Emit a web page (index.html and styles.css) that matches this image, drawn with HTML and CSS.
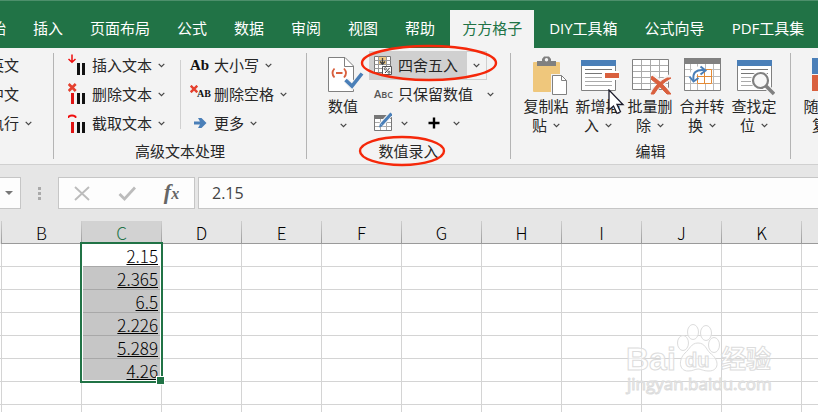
FILE: index.html
```
<!DOCTYPE html>
<html lang="zh-CN">
<head>
    <meta charset="UTF-8">
    <meta name="viewport" content="width=device-width, initial-scale=1.0">
    <title>方方格子</title>
    <link rel="stylesheet" href="styles.css">
</head>
<body>
    <!-- Shared symbols -->
    <svg class="symbols" aria-hidden="true">
        <symbol id="chevron" viewBox="0 0 7 5">
            <path d="M0.7 0.8 L3.5 3.6 L6.3 0.8" fill="none" stroke="#444" stroke-width="1.2"/>
        </symbol>
    </svg>

    <!-- Tabs -->
    <nav class="tabs">
        <a href="#">开始</a>
        <a href="#">插入</a>
        <a href="#">页面布局</a>
        <a href="#">公式</a>
        <a href="#">数据</a>
        <a href="#">审阅</a>
        <a href="#">视图</a>
        <a href="#">帮助</a>
        <a href="#" class="active">方方格子</a>
        <a href="#">DIY工具箱</a>
        <a href="#">公式向导</a>
        <a href="#">PDF工具集</a>
    </nav>

    <!-- Ribbon -->
    <div class="ribbon">
        <section class="group group-first">
            <div class="group-body">
                <div class="stack">
                    <button class="item">英文</button>
                    <button class="item">中文</button>
                    <button class="item">执行<svg class="chevron"><use href="#chevron"/></svg></button>
                </div>
            </div>
        </section>
        <span class="divider"></span>

        <section class="group">
            <div class="group-body">
                <div class="stack stack-text">
                    <button class="item">
                        <svg class="icon" viewBox="0 0 18 22"><path d="M4 0.500v7.500M0.500 5L4 8.200L7.500 5" fill="none" stroke="#f00d0d" stroke-width="1.500"/><path d="M9 9h3v12H9zM14 9h3v12h-3z" fill="#111"/></svg>
                        插入文本<svg class="chevron"><use href="#chevron"/></svg>
                    </button>
                    <button class="item">
                        <svg class="icon" viewBox="0 0 18 22"><path d="M0.700 1l7 7M7.700 1l-7 7" stroke="#e5402e" stroke-width="2.600"/><path d="M3 10h3v11H3z" fill="#e01414"/><path d="M9 10h3v11H9zM14 10h3v11h-3z" fill="#111"/></svg>
                        删除文本<svg class="chevron"><use href="#chevron"/></svg>
                    </button>
                    <button class="item">
                        <svg class="icon" viewBox="0 0 18 22"><path d="M0.500 6V4.500Q4 2.500 7.500 4.500V6" fill="none" stroke="#f00d0d" stroke-width="1.800"/><path d="M3 10h3v11H3z" fill="#e01414"/><path d="M9 10h3v11H9zM14 10h3v11h-3z" fill="#111"/></svg>
                        截取文本<svg class="chevron"><use href="#chevron"/></svg>
                    </button>
                </div>
                <span class="divider divider-inner"></span>
                <div class="stack stack-case">
                    <button class="item"><span class="icon glyph-case">Ab</span>大小写<svg class="chevron"><use href="#chevron"/></svg></button>
                    <button class="item">
                        <span class="icon glyph-space"><svg viewBox="0 0 8 8"><path d="M0.700 0.700l6.600 6.600M7.300 0.700L0.700 7.300" stroke="#e5402e" stroke-width="2.400"/></svg>AB</span>
                        删除空格<svg class="chevron"><use href="#chevron"/></svg>
                    </button>
                    <button class="item">
                        <svg class="icon" viewBox="0 0 18 22"><path d="M4 9.500h6L8 6h3.500l5 5l-5 5H8l2-3.500H4z" fill="#4a7fb8"/></svg>
                        更多<svg class="chevron"><use href="#chevron"/></svg>
                    </button>
                </div>
            </div>
            <h2 class="group-name">高级文本处理</h2>
        </section>
        <span class="divider"></span>

        <section class="group">
            <div class="group-body group-number">
                <button class="big big-narrow">
                    <svg class="big-icon" viewBox="0 0 42 42">
                        <path d="M6.500 2.500H23L31.500 11V36.500H6.500z" fill="#fff" stroke="#808080"/>
                        <path d="M22.500 2.500V11.500H31.500" fill="none" stroke="#808080"/>
                        <path d="M12.500 13.500q-4 4.500 0 9M22 13.500q4 4.500 0 9M14 18h6.500" fill="none" stroke="#d9603e" stroke-width="1.800"/>
                        <path d="M24 25l6 6.500L40 19" fill="none" stroke="#f3f3f3" stroke-width="6"/>
                        <path d="M23.500 25l6.500 6L40 18.500" fill="none" stroke="#4a7fb8" stroke-width="3.600"/>
                    </svg>
                    <span>数值</span>
                    <span><svg class="chevron"><use href="#chevron"/></svg></span>
                </button>
                <div class="stack">
                    <div class="split">
                        <button class="item split-main">
                            <svg class="icon" viewBox="0 0 18 22">
                                <path d="M0.500 2.500h16v16h-16z" fill="#fff" stroke="#777"/>
                                <path d="M5 3h7v8H5z" fill="#efc981"/>
                                <path d="M4.500 2.500v16M12.500 2.500v16M0.500 6.500h16M0.500 10.500h16M0.500 14.500h16" stroke="#999"/>
                                <path d="M8.500 4v6M6 7.500l2.500 2.700L11 7.500" fill="none" stroke="#444" stroke-width="1.300"/>
                                <path d="M8.500 12.500h9v8h-9z" fill="#fff" stroke="#555"/>
                                <path d="M11 19l4.500-5" stroke="#333"/><circle cx="11.300" cy="14.800" r="1.100" fill="none" stroke="#333" stroke-width=".8"/><circle cx="15" cy="18.200" r="1.100" fill="none" stroke="#333" stroke-width=".8"/>
                            </svg>
                            四舍五入
                        </button>
                        <button class="split-arrow" aria-label="四舍五入选项"><svg class="chevron"><use href="#chevron"/></svg></button>
                        <svg class="mark mark-round" viewBox="0 0 138 38"><ellipse cx="69" cy="19" rx="67" ry="17"/></svg>
                    </div>
                    <button class="item item-keep"><span class="icon glyph-abc">A<small>BC</small></span>只保留数值<svg class="chevron"><use href="#chevron"/></svg></button>
                    <div class="tools">
                        <button class="item" aria-label="录入">
                            <svg class="icon" viewBox="0 0 18 22">
                                <path d="M0.500 3.500h17v15h-17z" fill="#fff" stroke="#777"/>
                                <path d="M0 3h18v4H0z" fill="#777"/>
                                <path d="M6.500 7v11M12.500 7v11M1 10.500h16M1 14.500h16" stroke="#aaa"/>
                                <path d="M7 13L17 2" stroke="#f3f3f3" stroke-width="5"/>
                                <path d="M7.500 12.500L17.500 1.500" stroke="#4a7fb8" stroke-width="3"/>
                                <path d="M5 15.500l1-4l3 2.500z" fill="#4a7fb8"/>
                            </svg>
                            <svg class="chevron"><use href="#chevron"/></svg>
                        </button>
                        <button class="item" aria-label="加">
                            <svg class="icon" viewBox="0 0 18 22"><path d="M8 5.500v11M2.500 11h11" stroke="#000" stroke-width="2.400"/></svg>
                            <svg class="chevron"><use href="#chevron"/></svg>
                        </button>
                    </div>
                </div>
            </div>
            <h2 class="group-name"><span class="marked">数值录入<svg class="mark mark-name" viewBox="0 0 88 32"><ellipse cx="44" cy="16" rx="42" ry="14"/></svg></span></h2>
        </section>
        <span class="divider"></span>

        <section class="group">
            <div class="group-body group-edit">
                <button class="big">
                    <svg class="big-icon" viewBox="0 0 42 42">
                        <rect x="8" y="7" width="27" height="30" rx="1" fill="#efc77c"/>
                        <path d="M12 6h5v-2l2-2.500h5l2 2.500v2h5v5H12z" fill="#808080"/>
                        <circle cx="21.500" cy="4.800" r="1.700" fill="#f3f3f3"/>
                        <path d="M26 19h11l6 6v17H26z" fill="#f3f3f3"/>
                        <path d="M27.500 20.500h9l5 5v14h-14z" fill="#fff" stroke="#808080"/>
                        <path d="M36.500 20.500v5h5" fill="none" stroke="#808080"/>
                    </svg>
                    <span>复制粘</span>
                    <span>贴<svg class="chevron"><use href="#chevron"/></svg></span>
                </button>
                <button class="big">
                    <svg class="big-icon" viewBox="0 0 42 42">
                        <path d="M4.500 5.500h34v30h-34z" fill="#fff" stroke="#808080"/>
                        <path d="M4 5h35v6H4z" fill="#4a7fb8"/>
                        <path d="M8 14.500h27M8 18.500h17" stroke="#777"/>
                        <path d="M8 22.500h17M8 26.500h27M8 30.500h27" stroke="#aaa"/>
                        <path d="M26 16h16v9H26z" fill="#fff"/>
                        <path d="M28 18h14v5H28z" fill="#d9603e"/>
                    </svg>
                    <span>新增插</span>
                    <span>入<svg class="chevron"><use href="#chevron"/></svg></span>
                    <svg class="pointer" viewBox="0 0 17 26"><path d="M1 1v20l4.500-4L9 24.500l3.500-1.700L9 15.500h6z" fill="#fff" stroke="#1c1c2c" stroke-width="1.300"/></svg>
                </button>
                <button class="big">
                    <svg class="big-icon" viewBox="0 0 42 42">
                        <path d="M3.500 4.500h36v30h-36z" fill="#fff" stroke="#808080"/>
                        <path d="M12.500 5v29M21.500 5v29M30.500 5v29M4 10.500h35M4 16.500h35M4 22.500h35M4 28.500h35" stroke="#aaa"/>
                        <path d="M23 21Q31 27 41 39M41 22Q29 29 23 38" fill="none" stroke="#f3f3f3" stroke-width="6"/>
                        <path d="M23 21Q33 27 42 39L38 39Q31 31 22 24zM42 23Q31 29 25 39L22 39Q26 29 38 23z" fill="#d9603e" stroke="#d9603e"/>
                    </svg>
                    <span>批量删</span>
                    <span>除<svg class="chevron"><use href="#chevron"/></svg></span>
                </button>
                <button class="big">
                    <svg class="big-icon" viewBox="0 0 42 42">
                        <path d="M3.500 4.500h36v31h-36z" fill="#fff" stroke="#808080"/>
                        <path d="M9.500 9v26M16.500 9v26M24.500 9v26M32.500 9v26M4 14.500h35M4 21.500h35M4 28.500h35" stroke="#bbb"/>
                        <path d="M3 3h37v6H3z" fill="#808080"/>
                        <path d="M16.500 14.500h14v14h-14zM23.500 14.500v14M16.500 21.500h14" fill="#fff" stroke="#e48a35"/>
                        <path d="M12 24Q11 14 22 14.500" fill="none" stroke="#fff" stroke-width="7"/>
                        <path d="M12.500 25Q11 14 23 15" fill="none" stroke="#4a7fb8" stroke-width="2"/>
                        <path d="M19.500 11.500l5 4l-5 4M8.500 21.500l4 5l5-3.500" fill="none" stroke="#4a7fb8" stroke-width="2"/>
                    </svg>
                    <span>合并转</span>
                    <span>换<svg class="chevron"><use href="#chevron"/></svg></span>
                </button>
                <button class="big">
                    <svg class="big-icon" viewBox="0 0 42 42">
                        <path d="M4.500 5.500h34v30h-34z" fill="#fff" stroke="#808080"/>
                        <path d="M4 5h35v6H4z" fill="#4a7fb8"/>
                        <path d="M8 14.500h27M8 18.500h27" stroke="#777"/>
                        <path d="M8 22.500h13M8 26.500h10M8 30.500h13" stroke="#aaa"/>
                        <path d="M33 31l8 8" stroke="#f3f3f3" stroke-width="6"/>
                        <circle cx="27.500" cy="25.500" r="9.500" fill="#fff"/>
                        <circle cx="27.500" cy="25.500" r="7.500" fill="#f8f8f8" stroke="#808080" stroke-width="2.200"/>
                        <path d="M33 31l8 8" stroke="#808080" stroke-width="3.500"/>
                    </svg>
                    <span>查找定</span>
                    <span>位<svg class="chevron"><use href="#chevron"/></svg></span>
                </button>
            </div>
            <h2 class="group-name">编辑</h2>
        </section>
        <span class="divider"></span>

        <section class="group">
            <div class="group-body group-edit">
                <button class="big">
                    <svg class="big-icon" viewBox="0 0 42 42"><path d="M7 3h16v16H7z" fill="#4a7fb8"/><path d="M7 20h16v16H7z" fill="#d9603e"/></svg>
                    <span>随机重</span>
                    <span>复<svg class="chevron"><use href="#chevron"/></svg></span>
                </button>
            </div>
        </section>
    </div>

    <!-- Formula bar -->
    <div class="formula-bar">
        <button class="name-box" aria-label="名称框"><svg viewBox="0 0 8 4"><path d="M0 0h8L4 4z" fill="#777"/></svg></button>
        <span class="grip"><i></i><i></i><i></i></span>
        <div class="formula-tools">
            <button aria-label="取消"><svg viewBox="0 0 18 18"><path d="M2 3l14 13M16 3L2 16" stroke="#bcbcbc" stroke-width="1.900"/></svg></button>
            <button aria-label="输入"><svg viewBox="0 0 18 18"><path d="M1.500 10l5 5L17 3.500" fill="none" stroke="#bcbcbc" stroke-width="2.800"/></svg></button>
            <button class="fx" aria-label="插入函数">f<small>x</small></button>
        </div>
        <input class="formula-input" type="text" value="2.15" aria-label="编辑栏">
    </div>

    <!-- Sheet -->
    <div class="sheet">
        <table>
            <colgroup><col class="col-edge"><col class="col"><col class="col"><col class="col"><col class="col"><col class="col"><col class="col"><col class="col"><col class="col"><col class="col"><col class="col"><col></colgroup>
            <thead>
                <tr><th></th><th>B</th><th class="selected">C</th><th>D</th><th>E</th><th>F</th><th>G</th><th>H</th><th>I</th><th>J</th><th>K</th><th></th></tr>
            </thead>
            <tbody>
                <tr><td></td><td></td><td class="value first">2.15<span class="selection"></span></td><td></td><td></td><td></td><td></td><td></td><td></td><td></td><td></td><td></td></tr>
                <tr><td></td><td></td><td class="value">2.365</td><td></td><td></td><td></td><td></td><td></td><td></td><td></td><td></td><td></td></tr>
                <tr><td></td><td></td><td class="value">6.5</td><td></td><td></td><td></td><td></td><td></td><td></td><td></td><td></td><td></td></tr>
                <tr><td></td><td></td><td class="value">2.226</td><td></td><td></td><td></td><td></td><td></td><td></td><td></td><td></td><td></td></tr>
                <tr><td></td><td></td><td class="value">5.289</td><td></td><td></td><td></td><td></td><td></td><td></td><td></td><td></td><td></td></tr>
                <tr><td></td><td></td><td class="value">4.26</td><td></td><td></td><td></td><td></td><td></td><td></td><td></td><td></td><td></td></tr>
                <tr><td></td><td></td><td></td><td></td><td></td><td></td><td></td><td></td><td></td><td></td><td></td><td></td></tr>
                <tr><td></td><td></td><td></td><td></td><td></td><td></td><td></td><td></td><td></td><td></td><td></td><td></td></tr>
            </tbody>
        </table>
    </div>

    <!-- Watermark -->
    <svg class="watermark" viewBox="0 0 150 76">
        <g class="watermark-outline">
            <text class="wm-name" x="2" y="46">Bai</text>
            <ellipse cx="59" cy="19" rx="5.500" ry="7.500"/>
            <ellipse cx="69" cy="8" rx="5.500" ry="7.500"/>
            <ellipse cx="82" cy="9" rx="5.500" ry="7.500"/>
            <ellipse cx="90" cy="21" rx="5.500" ry="7.500"/>
            <path d="M74 19C81 19 82 25 86 29C96 36 95 47 85 47C79 47 77 45 74 45C71 45 69 47 64 47C55 47 54 36 61 29C66 25 67 19 74 19z"/>
            <text class="wm-du" x="61" y="43">du</text>
            <text class="wm-cjk" x="97" y="44">经验</text>
            <text class="wm-url" x="3" y="66">jingyan.baidu.com</text>
        </g>
    </svg>
</body>
</html>
```
FILE: styles.css
```
* {
    box-sizing: border-box;
}

body {
    margin: 0;
    height: 100vh;
    overflow: hidden;
    position: relative;
    background-color: #fff;
    color: #262626;
    font-family: "Open Sans", "Noto Sans CJK SC", sans-serif;
    font-size: 15px;
}

button {
    margin: 0;
    padding: 0;
    border: none;
    background: none;
    color: inherit;
    font: inherit;
    white-space: nowrap;
}

.symbols {
    display: none;
}

/* Tabs */
.tabs {
    display: flex;
    gap: 3px;
    height: 48px;
    padding-top: 9px;
    overflow: hidden;
    background-color: #217346;
    border-top: 1px solid #4d8f6b;
}

.tabs a {
    flex: none;
    padding: 0 12px;
    line-height: 36px;
    color: #fff;
    text-decoration: none;
}

.tabs a:first-child {
    margin-left: -36px;
}

.tabs .active {
    background-color: #f3f3f3;
    color: #217346;
}

/* Ribbon */
.ribbon {
    position: relative;
    display: flex;
    height: 117px;
    padding-top: 3px;
    background-color: #f3f3f3;
    border-bottom: 1px solid #d0d0d0;
}

.group {
    flex: none;
}

.group:last-child {
    flex: 1;
    min-width: 0;
    overflow: hidden;
}

.group-first {
    width: 64px;
    margin-left: -11px;
}

.group-body {
    display: flex;
    height: 87px;
}

.group-name {
    margin: 0;
    font-size: 15px;
    font-weight: normal;
    line-height: 26px;
    text-align: center;
}

.divider {
    flex: none;
    width: 1px;
    margin: 2px 0 5px;
    background-color: #b4b4b4;
}

.divider-inner {
    margin: 9px 0;
    background-color: #d0d0d0;
}

.stack {
    display: flex;
    flex-direction: column;
    align-items: flex-start;
}

.stack-text {
    padding: 0 15px 0 14px;
}

.stack-case {
    padding: 0 19px 0 9px;
}

.item {
    display: flex;
    align-items: center;
    gap: 6px;
    height: 29px;
    line-height: 22px;
    padding-bottom: 1px;
}

.icon {
    flex: none;
    width: 18px;
    height: 22px;
}

.chevron {
    flex: none;
    width: 7px;
    height: 5px;
}

.glyph-case {
    color: #111;
    font: bold 15px/22px "Liberation Serif", serif;
    text-align: right;
}

.glyph-space {
    display: flex;
    align-items: center;
    color: #111;
    font: bold 10px/22px "Liberation Serif", serif;
}

.glyph-space svg {
    flex: none;
    width: 8px;
    height: 8px;
    margin: 0 -1px 10px 0;
}

.glyph-abc {
    color: #555;
    font-size: 11px;
    font-weight: 600;
    line-height: 22px;
    text-align: left;
}

.glyph-abc small {
    font-size: 9px;
}

.group-number {
    gap: 4px;
    padding: 0 16px 0 14px;
}

.split {
    position: relative;
    display: flex;
}

.split-main {
    padding: 0 9px 1px 5px;
    background-color: #d0d0d0;
}

.split-arrow {
    display: flex;
    align-items: center;
    justify-content: center;
    width: 20px;
    border: 1px solid #d0d0d0;
    border-left: none;
}

.item-keep {
    padding-left: 5px;
}

.item-keep .chevron {
    margin-left: 8px;
}

.tools {
    display: flex;
    gap: 18px;
    padding-left: 5px;
}

.tools .item {
    gap: 9px;
}

.mark {
    position: absolute;
    fill: none;
    stroke: #f5280a;
    stroke-width: 2.4px;
    pointer-events: none;
}

.mark-round {
    left: -9px;
    top: -7px;
    width: 138px;
    height: 38px;
}

.marked {
    position: relative;
}

.mark-name {
    left: -21px;
    top: -6px;
    width: 88px;
    height: 32px;
}

.group-edit {
    padding: 0 10px 0 9px;
}

.big {
    position: relative;
    display: flex;
    flex: none;
    flex-direction: column;
    align-items: center;
    width: 52px;
    padding-top: 4px;
}

.big-narrow {
    width: 44px;
}

.big-icon {
    flex: none;
    width: 42px;
    height: 42px;
}

.big span {
    display: flex;
    align-items: center;
    gap: 6px;
    height: 19px;
    line-height: 19px;
}

.pointer {
    position: absolute;
    left: 36px;
    top: 38px;
    width: 17px;
    height: 26px;
}

/* Formula bar */
.formula-bar {
    display: flex;
    height: 56px;
    padding: 12px 0;
    background-color: #e6e6e6;
}

.name-box {
    width: 21px;
    padding-right: 7px;
    border: 1px solid #c6c6c6;
    border-left: none;
    background-color: #fdfdfd;
    text-align: right;
}

.name-box svg {
    display: block;
    width: 8px;
    height: 4px;
    margin-left: auto;
}

.grip {
    display: flex;
    flex-direction: column;
    align-items: center;
    justify-content: center;
    gap: 2px;
    width: 37px;
}

.grip i {
    width: 3px;
    height: 3px;
    background-color: #aaa;
}

.formula-tools {
    display: flex;
    width: 137px;
    margin-right: 3px;
    border: 1px solid #c6c6c6;
    background-color: #fdfdfd;
}

.formula-tools button {
    flex: 1;
}

.formula-tools svg {
    display: block;
    width: 18px;
    height: 18px;
    margin: 0 auto;
}

.formula-tools .fx {
    color: #666;
    font: italic bold 22px/26px "Liberation Serif", serif;
}

.fx small {
    font-size: 16px;
}

.formula-input {
    flex: 1;
    min-width: 0;
    padding: 0 13px;
    border: 1px solid #c6c6c6;
    border-right: none;
    background-color: #fdfdfd;
    color: #444;
    font: 16px "Open Sans", "Noto Sans CJK SC", sans-serif;
}

/* Sheet */
table {
    width: 100%;
    table-layout: fixed;
    border-collapse: separate;
    border-spacing: 0;
    font-family: "Noto Sans CJK SC", sans-serif;
    font-size: 17px;
    font-weight: 300;
    color: #000;
}

.col-edge {
    width: 2px;
}

.col {
    width: 80px;
}

th,
td {
    height: 23px;
    padding: 2px 0 0;
    line-height: 20px;
}

th {
    border-right: 1px solid;
    border-bottom: 1px solid;
    border-image: linear-gradient(#d0d0d0, #999) 1;
    background-color: #e6e6e6;
    font-weight: 300;
}

th:last-child,
td:last-child {
    border-right: none;
}

th.selected {
    background-color: #d2d2d2;
    color: #217346;
}

td {
    border-right: 1px solid #d4d4d4;
    border-bottom: 1px solid #d4d4d4;
}

.value {
    padding-right: 3px;
    border-bottom-color: #a8a8a8;
    background-color: #c6c6c6;
    text-align: right;
    text-decoration: underline;
    text-decoration-thickness: 1px;
    text-underline-offset: 1px;
}

.value.first {
    position: relative;
    background-color: #fff;
}

/* Covers the six selected cells */
.selection {
    position: absolute;
    left: -2px;
    right: -2px;
    top: -2px;
    height: 141px;
    border: 2px solid #217346;
    box-shadow: inset 0 0 0 1px #fff;
}

.selection::after {
    content: "";
    position: absolute;
    right: -4px;
    bottom: -4px;
    width: 7px;
    height: 7px;
    border: 1px solid #fff;
    background-color: #217346;
}

/* Watermark */
.watermark {
    position: absolute;
    right: 44px;
    bottom: 12px;
    width: 150px;
    height: 76px;
    pointer-events: none;
}

.watermark-outline {
    fill: #fff;
    fill-opacity: 0.6;
    stroke: #dcdcdc;
    stroke-width: 1px;
}

.wm-name {
    font: bold 32px "Liberation Sans", sans-serif;
}

.wm-du {
    font: bold 20px "Liberation Sans", sans-serif;
}

.wm-cjk {
    font: bold 25px "Noto Sans CJK SC", sans-serif;
}

.wm-url {
    font: 17px "Open Sans", sans-serif;
}
```
